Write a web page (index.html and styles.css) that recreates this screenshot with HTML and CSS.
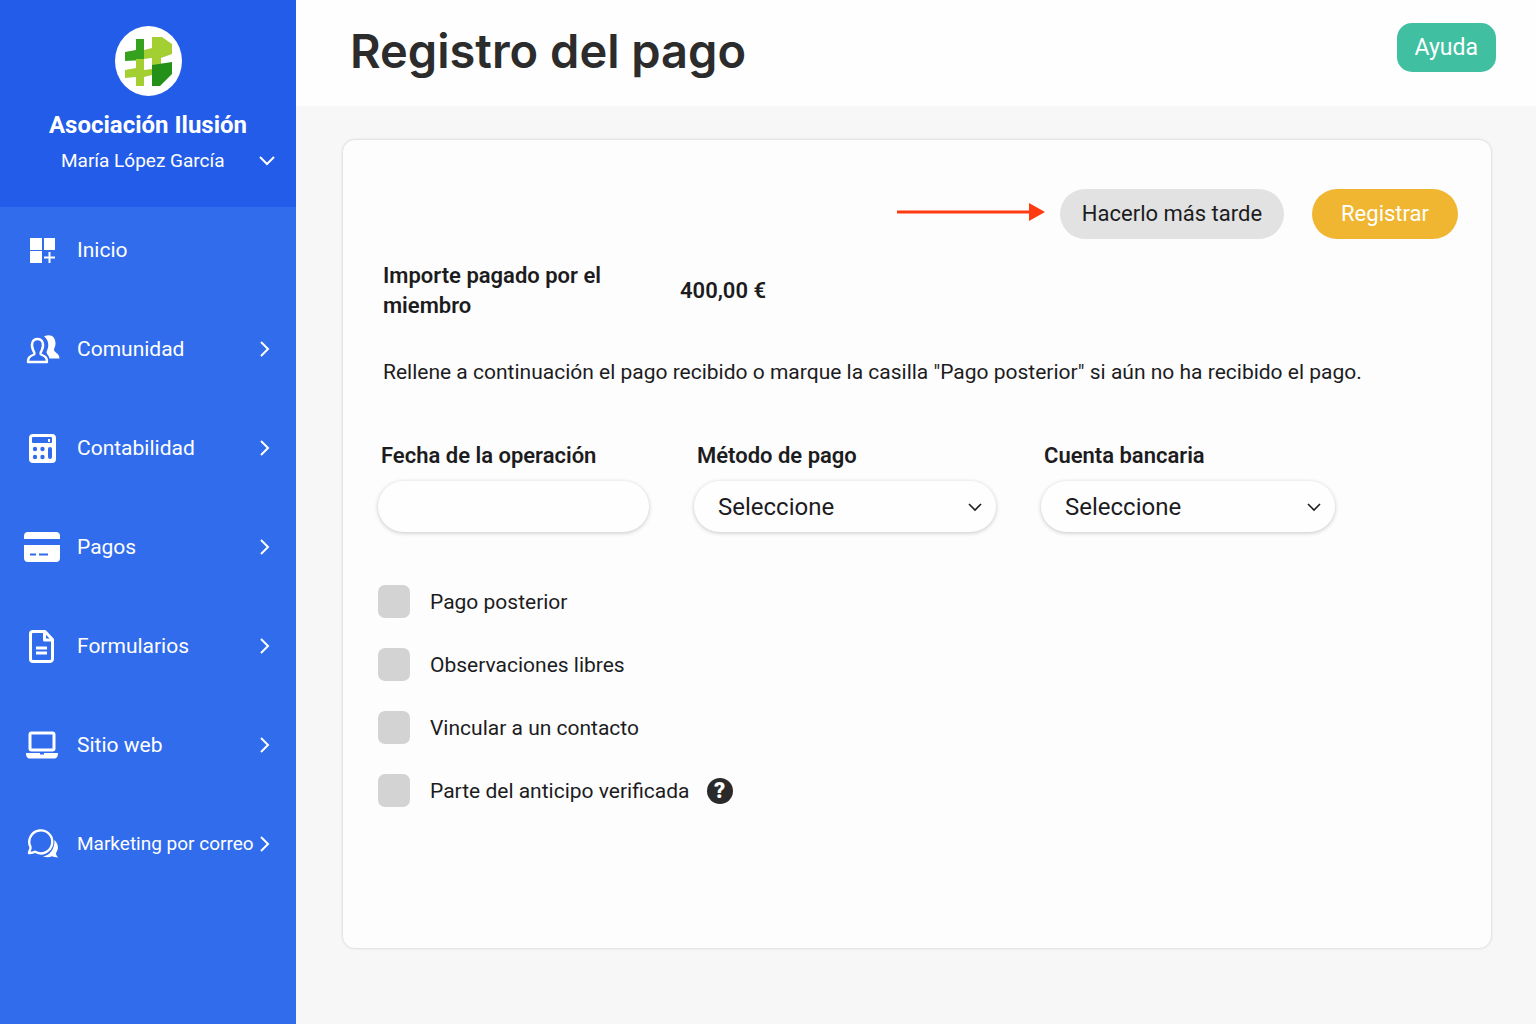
FILE: index.html
```html
<!DOCTYPE html>
<html lang="es">
<head>
    <meta charset="UTF-8">
    <meta name="viewport" content="width=device-width, initial-scale=1.0">
    <title>Registro del pago</title>
    <link rel="stylesheet" href="styles.css">
</head>
<body>

<aside class="sidebar">
    <div class="profile">
        <svg class="logo" viewBox="0 0 67 70" aria-hidden="true">
            <ellipse cx="33.5" cy="35" rx="33.5" ry="35" fill="#fff"/>
            <path d="M10 26l11-2V13h8v21l-19 1z" fill="#36a01f"/>
            <path d="M29 24l8-2V11h10l10 7v10l-11 4v6l-9 2v-8l-8 1z" fill="#a3cf32"/>
            <path d="M21 33h8v11l8-1v6l-8 2v9h-8v-9l-11 1v-8l11-2z" fill="#a3cf32"/>
            <path d="M37 39l20-3v12L45 60h-8z" fill="#239018"/>
            <path d="M29 34l8-2v8l-8 2z" fill="#fff"/>
        </svg>
        <div class="org-name">Asociación Ilusión</div>
        <button class="user-menu" type="button">
            <span>María López García</span>
            <svg class="chevron-down" viewBox="0 0 16 10" aria-hidden="true"><path d="M1 1l7 7 7-7"/></svg>
        </button>
    </div>

    <nav>
        <ul class="menu">
            <li><a href="#">
                <svg class="icon" viewBox="0 0 36 36" aria-hidden="true">
                    <path d="M6 6h12v12H6zM20 6h11v12H20zM6 19h12v12H6z" fill="currentColor"/>
                    <path d="M25.500 20v11M20 25.500h11" class="line thin"/>
                </svg>
                <span>Inicio</span>
            </a></li>
            <li><a href="#">
                <svg class="icon" viewBox="0 0 36 36" aria-hidden="true">
                    <path d="M20 5.500c6-3.500 12 0 11.500 7.500-.2 3-1.500 4-1.500 6 0 2.500 5.500 3 5.500 8.500H25.500c-.5-3-3-4.500-3-6.500 2.500-5 3-11.500-2.500-15.500z" fill="currentColor"/>
                    <path d="M4 31c0-4 1-5.500 6-7.500.8-.5.500-2-.5-3.500C6.500 14 8 8 13.500 8s7 6 4 12c-1 1.500-1.300 3-.5 3.500 5 2 6 3.500 6 7.500z" class="line"/>
                </svg>
                <span>Comunidad</span>
                <svg class="chevron-right" viewBox="0 0 10 16" aria-hidden="true"><path d="M1 1l7 7-7 7"/></svg>
            </a></li>
            <li><a href="#">
                <svg class="icon" viewBox="0 0 36 36" aria-hidden="true">
                    <path fill-rule="evenodd" d="M9 4h19a4 4 0 0 1 4 4v21a4 4 0 0 1-4 4H9a4 4 0 0 1-4-4V8a4 4 0 0 1 4-4zM9 7a1 1 0 0 0-1 1v4a1 1 0 0 0 1 1h18a1 1 0 0 0 1-1V8a1 1 0 0 0-1-1zM24 9h2v3h-2z" fill="currentColor"/>
                    <g class="hole"><circle cx="11" cy="19" r="2.200"/><circle cx="18.500" cy="19" r="2.200"/><circle cx="11" cy="27" r="2.200"/><circle cx="18.500" cy="27" r="2.200"/><rect x="24" y="17" width="4" height="12" rx="2"/></g>
                </svg>
                <span>Contabilidad</span>
                <svg class="chevron-right" viewBox="0 0 10 16" aria-hidden="true"><path d="M1 1l7 7-7 7"/></svg>
            </a></li>
            <li><a href="#">
                <svg class="icon" viewBox="0 0 36 36" aria-hidden="true">
                    <path d="M0 10V7a4 4 0 0 1 4-4h28a4 4 0 0 1 4 4v3zM0 16h36v13a4 4 0 0 1-4 4H4a4 4 0 0 1-4-4z" fill="currentColor"/>
                    <path class="hole" d="M6 24.500h6v2H6zM15 24.500h9v2h-9z"/>
                </svg>
                <span>Pagos</span>
                <svg class="chevron-right" viewBox="0 0 10 16" aria-hidden="true"><path d="M1 1l7 7-7 7"/></svg>
            </a></li>
            <li><a href="#">
                <svg class="icon" viewBox="0 0 36 36" aria-hidden="true">
                    <path d="M9 3.500h12l7.500 8V31a2.500 2.500 0 0 1-2.500 2.500H9A2.500 2.500 0 0 1 6.500 31V6A2.500 2.500 0 0 1 9 3.500z" class="line thick"/>
                    <path d="M20.500 4v8H28M12 20h11M12 25h11" class="line thick"/>
                </svg>
                <span>Formularios</span>
                <svg class="chevron-right" viewBox="0 0 10 16" aria-hidden="true"><path d="M1 1l7 7-7 7"/></svg>
            </a></li>
            <li><a href="#">
                <svg class="icon" viewBox="0 0 36 36" aria-hidden="true">
                    <rect x="6" y="6" width="24" height="17" rx="1.500" class="line thick"/>
                    <path d="M2 26h14v1.500h4V26h14c0 4-1.500 5.500-4 5.500H6c-2.500 0-4-1.500-4-5.500z" fill="currentColor"/>
                </svg>
                <span>Sitio web</span>
                <svg class="chevron-right" viewBox="0 0 10 16" aria-hidden="true"><path d="M1 1l7 7-7 7"/></svg>
            </a></li>
            <li><a href="#">
                <svg class="icon" viewBox="0 0 36 36" aria-hidden="true">
                    <path d="M30.500 14c4 4 4.500 9 1.500 13 0 2 1 3.500 2.500 4.500-3 0-5-.5-6.500-1.200-3 1.200-6 1.200-9 .2 7-1.500 11.500-7 11.500-16.500z" fill="currentColor"/>
                    <path d="M5.500 25c.7-1 1.200-2.500 1-4a11.500 11.500 0 1 1 4.500 4.800c-1.500.8-3.500 1.300-6 1.200z" class="line"/>
                </svg>
                <span class="long">Marketing por correo</span>
                <svg class="chevron-right" viewBox="0 0 10 16" aria-hidden="true"><path d="M1 1l7 7-7 7"/></svg>
            </a></li>
        </ul>
    </nav>
</aside>

<div class="page">
    <header class="topbar">
        <h1>Registro del pago</h1>
        <button class="help-button" type="button">Ayuda</button>
    </header>

    <main>
        <form class="card">
            <div class="actions">
                <svg class="arrow" viewBox="0 0 148 20" aria-hidden="true">
                    <path d="M0 6.500h132v3H0z"/>
                    <path d="M132-1l16 9-16 9z"/>
                </svg>
                <button class="btn btn-later" type="button">Hacerlo más tarde</button>
                <button class="btn btn-save" type="submit">Registrar</button>
            </div>

            <div class="amount">
                <div class="amount-label">Importe pagado por el miembro</div>
                <div>400,00 €</div>
            </div>

            <p class="intro">Rellene a continuación el pago recibido o marque la casilla "Pago posterior" si aún no ha recibido el pago.</p>

            <div class="fields">
                <div class="field">
                    <label for="date">Fecha de la operación</label>
                    <input type="text" id="date">
                </div>
                <div class="field">
                    <label for="method">Método de pago</label>
                    <div class="select">
                        <select id="method"><option>Seleccione</option></select>
                        <svg viewBox="0 0 14 9" aria-hidden="true"><path d="M1 1l6 6 6-6"/></svg>
                    </div>
                </div>
                <div class="field">
                    <label for="account">Cuenta bancaria</label>
                    <div class="select">
                        <select id="account"><option>Seleccione</option></select>
                        <svg viewBox="0 0 14 9" aria-hidden="true"><path d="M1 1l6 6 6-6"/></svg>
                    </div>
                </div>
            </div>

            <div class="options">
                <div class="option">
                    <input type="checkbox" id="later">
                    <label for="later">Pago posterior</label>
                </div>
                <div class="option">
                    <input type="checkbox" id="notes">
                    <label for="notes">Observaciones libres</label>
                </div>
                <div class="option">
                    <input type="checkbox" id="contact">
                    <label for="contact">Vincular a un contacto</label>
                </div>
                <div class="option">
                    <input type="checkbox" id="advance">
                    <label for="advance">Parte del anticipo verificada</label>
                    <button class="hint" type="button">?</button>
                </div>
            </div>
        </form>
    </main>
</div>

</body>
</html>
```
FILE: styles.css
```css
* {
    box-sizing: border-box;
}
body {
    margin: 0;
    display: flex;
    min-height: 100vh;
    font-family: Roboto, "Liberation Sans", sans-serif;
    font-size: 21px;
    line-height: 30px;
    color: #1c1c1e;
    background-color: #f7f7f7;
}
button, input, select {
    font: inherit;
    color: inherit;
    border: none;
}
button {
    cursor: pointer;
}

/* Sidebar */
.sidebar {
    flex: none;
    width: 296px;
    color: #fff;
    background-color: #316ced;
}
.profile {
    display: flex;
    flex-direction: column;
    align-items: center;
    height: 207px;
    padding-top: 26px;
    background-color: #225ce8;
}
.logo {
    width: 67px;
    height: 70px;
}
.org-name {
    margin-top: 14px;
    font-size: 24px;
    font-weight: 700;
}
.user-menu {
    display: flex;
    align-items: center;
    justify-content: space-between;
    width: 100%;
    margin-top: 6px;
    padding: 0 21px 0 61px;
    font-size: 19px;
    background: none;
}
.chevron-down, .chevron-right {
    flex: none;
    fill: none;
    stroke: currentColor;
    stroke-width: 2;
}
.chevron-down {
    width: 16px;
    height: 10px;
}
.chevron-right {
    width: 10px;
    height: 16px;
    margin-left: auto;
}
.menu {
    display: flex;
    flex-direction: column;
    gap: 57px;
    margin: 0;
    padding: 22px 26px 22px 24px;
    list-style: none;
}
.menu a {
    display: flex;
    align-items: center;
    height: 42px;
    color: inherit;
    text-decoration: none;
    white-space: nowrap;
}
.menu .long {
    font-size: 19px;
}
.icon {
    flex: none;
    width: 36px;
    height: 36px;
    margin-right: 17px;
}
.line {
    fill: none;
    stroke: currentColor;
    stroke-width: 2.4;
    stroke-linejoin: round;
}
.thin {
    stroke-width: 2;
}
.thick {
    stroke-width: 3;
}
.hole {
    fill: #316ced;
}

/* Page */
.page {
    flex: 1;
    display: flex;
    flex-direction: column;
}
.topbar {
    display: flex;
    align-items: flex-start;
    justify-content: space-between;
    height: 106px;
    padding: 23px 40px 0 54px;
    background-color: #fefefe;
}
h1 {
    margin: 0;
    font-family: Inter, "Liberation Sans", sans-serif;
    font-size: 47px;
    font-weight: 600;
    line-height: 56px;
    color: #2c2c2c;
}
.help-button {
    height: 49px;
    padding: 0 18px;
    font-size: 23px;
    color: #fff;
    background-color: #40c0a0;
    border-radius: 15px;
}
main {
    flex: 1;
    display: flex;
    padding: 34px 45px 76px 47px;
}
.card {
    flex: 1;
    padding: 49px 33px 49px 35px;
    background-color: #fdfdfd;
    border-radius: 12px;
    box-shadow: 0 0 3px rgba(0, 0, 0, 0.2);
}
.actions {
    display: flex;
    align-items: center;
    justify-content: flex-end;
}
.arrow {
    overflow: visible;
    width: 148px;
    height: 20px;
    margin-right: 15px;
    fill: #ff3a10;
}
.btn {
    height: 50px;
    font-size: 22px;
    border-radius: 25px;
}
.btn-later {
    padding: 0 22px;
    background-color: #e2e2e2;
}
.btn-save {
    margin-left: 28px;
    padding: 0 29px;
    color: #fff;
    background-color: #f0b631;
}
.amount {
    display: flex;
    align-items: center;
    margin-top: 22px;
    padding-left: 5px;
    font-size: 22px;
    font-weight: 600;
}
.amount-label {
    width: 233px;
    margin-right: 64px;
}
.intro {
    margin: 36px 0 0;
    padding-left: 5px;
}
.fields {
    display: grid;
    grid-template-columns: 271px 302px 294px;
    gap: 45px;
    margin-top: 54px;
}
.field label {
    display: block;
    margin-bottom: 10px;
    padding-left: 3px;
    font-size: 22px;
    font-weight: 600;
}
.field input, .field select {
    display: block;
    width: 100%;
    height: 51px;
    padding: 0 24px;
    font-size: 24px;
    background-color: #fefefe;
    border-radius: 26px;
    box-shadow: 0 1px 4px rgba(0, 0, 0, 0.22);
}
.select {
    position: relative;
}
.select select {
    appearance: none;
}
.select svg {
    position: absolute;
    top: 22px;
    right: 14px;
    width: 14px;
    height: 9px;
    fill: none;
    stroke: #1c1c1e;
    stroke-width: 1.6;
    pointer-events: none;
}
.options {
    display: flex;
    flex-direction: column;
    gap: 30px;
    margin-top: 53px;
}
.option {
    display: flex;
    align-items: center;
    height: 33px;
}
.option input {
    appearance: none;
    width: 32px;
    height: 33px;
    margin: 0 20px 0 0;
    background-color: #d3d3d3;
    border-radius: 7px;
}
.option input:checked {
    background-color: #316ced;
}
.hint {
    width: 26px;
    height: 26px;
    margin-left: 17px;
    padding: 0;
    font-size: 22px;
    font-weight: 900;
    line-height: 26px;
    color: #fff;
    background-color: #2a2a2a;
    border-radius: 50%;
}
```
